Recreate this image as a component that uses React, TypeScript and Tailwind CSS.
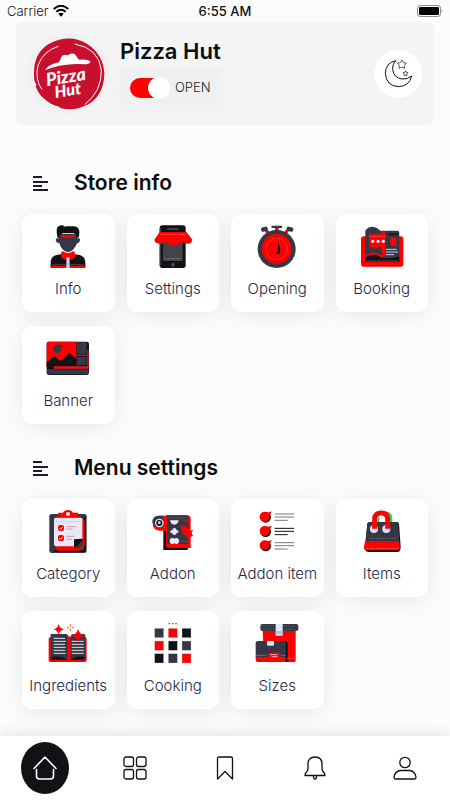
import { useState, type ReactNode } from "react";

const INK = "#353745";
const RED = "#ff0000";
const DARK = "#111216";

function Art({ box, children }: { box: string; children: ReactNode }) {
  return (
    <svg viewBox={box} className="size-11 shrink-0" aria-hidden="true">
      {children}
    </svg>
  );
}

const InfoArt = () => (
  <Art box="94 195 132 132">
    <path d="M123 240q0-5 5-5l4 2v-12l9-4h38l9 4v12l4-2q5 0 4 6-2 9-9 9-3 10-12 19-8 7-15 7t-15-7q-8-8-11-19-10-1-11-10z" fill={INK} />
    <path d="M130 238q-6-22-3-33 4-9 14-9l9 1-4 3q6-1 12-1h18q16 0 18 15 1 12-4 24l-5-13-8-6h-32l-9 6z" fill={DARK} />
    <path d="M141 224h5q14 6 29 0h5v6q-19 8-39 2z" fill={RED} />
    <path d="M108 324v-19q2-17 18-20l14-2h40l15 2q15 4 17 20v19z" fill={DARK} />
    <path d="M144 273q16 12 32 0l5 6v12l-11 9-10-7-10 7-11-9v-12z" fill={RED} />
    <path d="M108 317h104v4q0 3-4 3h-96q-4 0-4-3z" fill={RED} />
    <path d="M155 292h10v32h-10z" fill="#c6d5ee" />
    <path d="M113 314h39M168 314h39" stroke="#8b8e99" strokeWidth="2" strokeDasharray="3 2" />
  </Art>
);

const SettingsArt = () => (
  <Art box="407 195 132 132">
    <rect x="433" y="196" width="78" height="128" rx="8" fill={DARK} />
    <rect x="433" y="204" width="5" height="112" fill={INK} />
    <rect x="443" y="235" width="59" height="68" rx="3" fill="#444448" />
    <path d="M456 207h34" stroke="#55565c" strokeWidth="4" />
    <circle cx="473" cy="314" r="6" fill="#4a4b50" />
    <path d="M448 296h50" stroke="#aaa" strokeWidth="2" strokeDasharray="3 2" />
    <path d="M433 216h80l18 23q-2 13-15 12-9 0-12-6-5 8-13 3-5 10-17 8-9 0-14-8-9 4-13-3-4 7-14 6-15-1-16-12z" fill={RED} />
    <path d="M434 223h78" stroke="#ff9a9a" strokeWidth="2" strokeDasharray="3 2" />
  </Art>
);

const OpeningArt = () => (
  <Art box="91 60 132 132">
    <path d="M151 65h11v16h-11zM120 78l8-5 9 11-8 6zM193 78l-8-5-9 11 8 6z" fill={RED} />
    <rect x="140" y="62" width="33" height="7" rx="3" fill={INK} />
    <rect x="109" y="66" width="20" height="13" rx="5" fill={INK} transform="rotate(-15 119 72)" />
    <rect x="186" y="66" width="20" height="13" rx="5" fill={INK} transform="rotate(15 196 72)" />
    <circle cx="156" cy="132" r="57" fill={INK} />
    <circle cx="156" cy="132" r="45" fill={RED} />
    <circle cx="156" cy="132" r="32" fill="none" stroke="#df7474" strokeWidth="2" strokeDasharray="6 3" />
    <path d="M156 91v7M156 166v7M115 132h8M189 132h8" stroke={INK} strokeWidth="2" />
    <path d="M160 113q8 10 7 24-1 10-11 10l-5-4q9 0 9-8z" fill={DARK} />
  </Art>
);

const BookingArt = () => (
  <Art box="404 60 132 132">
    <rect x="407" y="94" width="127" height="91" rx="8" fill={RED} />
    <path d="M420 77q7-12 22-12 14 1 22 12h52q6 0 6 6v87H420z" fill={INK} />
    <path d="M420 157q26-17 50 0 14 7 52-2v16H420z" fill={DARK} />
    <path d="M420 154q25-18 52 3" fill="none" stroke={RED} strokeWidth="5" />
    <path d="M431 88h45q5 0 5 5v28q0 5-5 5h-20l-12 9v-9h-13zM467 78h14v72q-6 8-12 3z" fill={RED} />
    <path d="M431 94h48" stroke="#f08b8b" strokeWidth="2" strokeDasharray="3 2" />
    <circle cx="442" cy="109" r="5" fill="#e9eefb" />
    <circle cx="458" cy="109" r="5" fill="#e9eefb" />
    <circle cx="474" cy="109" r="5" fill="#e9eefb" />
    <path d="M489 88h28" stroke={DARK} strokeWidth="5" />
    <rect x="495" y="98" width="18" height="25" rx="2" fill={RED} />
    <path d="M482 133h32M482 141h36M482 149h24" stroke="#c8cbd5" strokeWidth="3" />
    <path d="M424 168h96" stroke="#bbb" strokeWidth="2" strokeDasharray="3 2" />
  </Art>
);

const BannerArt = () => (
  <Art box="94 51 132 132">
    <rect x="96" y="65" width="127" height="100" rx="7" fill={DARK} />
    <path d="M103 65h82v75h-89V72q0-7 7-7z" fill={RED} />
    <path d="M118 80q6-7 14-6h10v9q-3 12-13 16h-10q-5-10-1-19z" fill={INK} />
    <path d="M96 126l23-18 17 15 29-25 20 19v23H96z" fill={DARK} />
    <path d="M187 67h29v36h-29zM187 111h29v25h-29z" fill={INK} />
    <path d="M185 106h33M118 143h104" stroke="#cc1119" strokeWidth="4" />
    <path d="M118 139h100V90h4v56H118z" fill="#e8131b" />
    <path d="M98 148h124v9q0 6-6 6H104q-6 0-6-6z" fill={INK} />
  </Art>
);

const CategoryArt = () => (
  <Art box="94 60 132 132">
    <rect x="104" y="72" width="112" height="117" rx="7" fill={INK} />
    <path d="M208 80h5v106h-95v-5h90z" fill={DARK} />
    <path d="M124 87h80q6 0 6 6v70q-2 15-18 19h-60q-8 0-8-8z" fill={RED} />
    <path d="M121 83h77q5 0 5 5v58l-24 23h-55q-6 0-6-6V88z" fill="#e6e9f7" />
    <path d="M203 146v7l-20 20-5-5v-20z" fill={DARK} />
    <path d="M205 156v9l-12 10h-11z" fill={INK} />
    <path d="M131 68h14q4-8 15-8t15 8h13q3 0 3 4v9h-61v-9q0-4 1-4z" fill={RED} />
    <circle cx="160" cy="72" r="6" fill="#f2f3fb" />
    <path d="M124 95h74" stroke="#adb0be" strokeWidth="2" strokeDasharray="4 3" />
    <rect x="130" y="105" width="18" height="18" rx="6" fill={RED} />
    <rect x="130" y="135" width="18" height="18" rx="6" fill={RED} />
    <path d="M134 114l4 4 6-7M134 144l4 4 6-7" stroke="#fff" strokeWidth="3" fill="none" />
    <path d="M155 110h29M155 117h19M155 139h24M155 148h17" stroke="#e76c77" strokeWidth="2" />
  </Art>
);

const AddonArt = () => (
  <Art box="407 60 132 132">
    <path d="M444 110h74v66q0 4-4 4h-70z" fill={DARK} />
    <path d="M452 76h62q12 0 12 12v86h-66q-8 0-8-8z" fill={RED} />
    <path d="M455 76h58q6 0 6 6v80h-64z" fill={INK} />
    <path d="M432 77h23v45h-21q-17 0-22-16z" fill={RED} />
    <path d="M443 77v34h-13q-19-1-19-17 1-17 20-17z" fill={INK} />
    <circle cx="432" cy="99" r="13" fill="#dfe4f4" />
    <circle cx="432" cy="99" r="9" fill={DARK} />
    <circle cx="432" cy="98" r="4" fill="#e6e9f7" />
    <path d="M464 91h26q-3 13-13 13t-13-13z" fill="#e6e9f7" />
    <path d="M464 125q2-4 7-4 1-7 6-7 6 0 7 7 5 0 6 4-2 4-6 4-1 6-7 6-5 0-7-6-4 0-6-4z" fill="#e6e9f7" />
    <ellipse cx="471" cy="153" rx="8" ry="9" fill="#e6e9f7" />
    <ellipse cx="483" cy="153" rx="8" ry="9" fill="#e6e9f7" />
    <path d="M495 104l21 8 8 10 9-2-4 9 4 9-9 3-7 8-3-12-13-7z" fill={RED} />
    <path d="M499 93h18M493 154h23" stroke="#d41922" strokeWidth="3" />
    <path d="M460 84h56" stroke="#747681" strokeWidth="2" strokeDasharray="4 3" />
  </Art>
);

const AddonItemArt = () => (
  <Art box="91 60 132 132">
    {[0, 43, 86].map((y) => (
      <g key={y}>
        <circle cx="123" cy={82 + y} r="16" fill={DARK} />
        <circle cx="120" cy={80 + y} r="15" fill={RED} />
        <path d={`M126 ${69 + y}l15-5-5 12z`} fill={RED} />
        <path
          d={`M150 ${72 + y}h58M150 ${81 + y}h58M150 ${91 + y}h39`}
          stroke={y === 43 ? "#111216" : "#777983"}
          strokeWidth="3"
        />
      </g>
    ))}
  </Art>
);

const ItemsArt = () => (
  <Art box="404 60 132 132">
    <path d="M484 64q17 4 17 22v11h-10z" fill="#17e05e" />
    <path d="M435 96h80q5 0 6 5l5 69q0 16-10 16h-86q-9 0-11-9l7-76q1-5 9-5z" fill={DARK} />
    <path d="M433 96h78q6 0 7 6l4 53H420l6-54q1-5 7-5z" fill={INK} />
    <path d="M419 153h102l3 20q0 8-8 8h-93q-8 0-7-9z" fill={RED} />
    <circle cx="446" cy="117" r="12" fill="#dfe5f7" />
    <circle cx="483" cy="117" r="12" fill="#dfe5f7" />
    <path d="M448 116V88q0-18 18-19h2q19 0 19 19v28" fill="none" stroke={RED} strokeWidth="15" />
    <path d="M457 96V83q3-6 6-4v17z" fill="#14d65a" />
    <path d="M462 79q6-3 13 0v17h-13z" fill="#fff" />
    <path d="M431 145h82" stroke="#858791" strokeWidth="2" strokeDasharray="4 3" />
    <path d="M424 176h94" stroke="#ff9b9b" strokeWidth="2" strokeDasharray="4 3" />
  </Art>
);

const IngredientsArt = () => (
  <Art box="94 51 132 132">
    <rect x="102" y="96" width="114" height="75" rx="6" fill={RED} />
    <path d="M108 87h45q8 0 8 8v69h-47q-6 0-6-6zM168 93q2-6 8-6h32q4 0 4 5v66q0 6-6 6h-38z" fill={INK} />
    <path d="M158 94h8v76h-8z" fill={RED} />
    <path d="M108 157q27-7 50 7h-45q-5 0-5-7zM166 164q24-14 46-7-1 7-8 7z" fill={DARK} />
    <path d="M117 100h34M117 109h37M117 118h34M117 127h36M117 136h34M117 145h36M171 109h36M171 118h36M171 127h36M171 136h36M171 145h36" stroke="#dfe4ed" strokeWidth="3" />
    <path d="M132 56q2 14 17 17-15 3-17 17-2-14-16-17 14-3 16-17zM190 71q3 17 21 21-18 4-21 20-3-16-20-20 17-4 20-21z" fill={RED} />
    <path d="M167 57v8M167 71v8M157 68h7M171 68h7" stroke={RED} strokeWidth="2" />
  </Art>
);

const cookingCells = [INK, RED, DARK, RED, DARK, INK, DARK, INK, RED];

const CookingArt = () => (
  <Art box="407 51 132 132">
    {cookingCells.map((fill, i) => (
      <rect
        key={i}
        x={418 + (i % 3) * 41}
        y={70 + Math.floor(i / 3) * 38}
        width="27"
        height="28"
        fill={fill}
        stroke="#cfd0d3"
        strokeWidth="1"
      />
    ))}
    <path d="M460 56h26" stroke={RED} strokeWidth="4" strokeDasharray="4 6" />
  </Art>
);

const SizesArt = () => (
  <Art box="91 51 132 132">
    <path d="M114 75h99v92q0 4-5 4h-90z" fill={RED} />
    <rect x="107" y="57" width="114" height="21" rx="6" fill={INK} />
    <path d="M110 63h108M110 73h108" stroke="#666975" strokeWidth="2" strokeDasharray="3 2" />
    <path d="M153 57h21v35h-21z" fill="#e0e8fa" />
    <path d="M153 78h21v9h-21z" fill="#a9c5f2" />
    <path d="M105 108h76q8 0 8 8v55h-83z" fill={DARK} />
    <path d="M100 108h76q7 0 7 7v42H93v-42q0-7 7-7z" fill={INK} />
    <path d="M93 156h90v15H99q-6 0-6-6z" fill={RED} />
    <path d="M127 108h21v10q0 4-4 4h-13q-4 0-4-4z" fill="#e0e8fa" />
    <path d="M131 143h35v22h-35z" fill={RED} />
    <path d="M136 149h23M141 155h18" stroke="#fff" strokeWidth="2" />
    <path d="M96 151h31M169 151h14M187 160h24" stroke="#aaa" strokeWidth="2" strokeDasharray="4 2" />
  </Art>
);

type Tile = { label: string; art: ReactNode };

const storeTiles: Tile[] = [
  { label: "Info", art: <InfoArt /> },
  { label: "Settings", art: <SettingsArt /> },
  { label: "Opening", art: <OpeningArt /> },
  { label: "Booking", art: <BookingArt /> },
  { label: "Banner", art: <BannerArt /> },
];

const menuTiles: Tile[] = [
  { label: "Category", art: <CategoryArt /> },
  { label: "Addon", art: <AddonArt /> },
  { label: "Addon item", art: <AddonItemArt /> },
  { label: "Items", art: <ItemsArt /> },
  { label: "Ingredients", art: <IngredientsArt /> },
  { label: "Cooking", art: <CookingArt /> },
  { label: "Sizes", art: <SizesArt /> },
];

function Section({ title, tiles }: { title: string; tiles: Tile[] }) {
  return (
    <section className="px-[22px]">
      <div className="flex items-center gap-[25px] pl-[11px]">
        <svg viewBox="0 0 16 16" className="size-4" stroke="#1b1d2b" strokeWidth="2" aria-hidden="true">
          <path d="M0 2h9M0 7h15M0 11h9M0 15h15" />
        </svg>
        <h2 className="text-[21px] leading-7 font-semibold text-[#0c0d0f]">{title}</h2>
      </div>
      <div className="mt-[17px] grid grid-cols-4 gap-x-3 gap-y-3.5">
        {tiles.map((tile) => (
          <button
            key={tile.label}
            type="button"
            className="flex h-[98px] flex-col items-center rounded-[10px] bg-white pt-[11px] shadow-[0_4px_24px_rgba(0,0,0,0.08)]"
          >
            {tile.art}
            <span className="mt-[9px] text-[15px] leading-[22px] font-light whitespace-nowrap text-[#25274a]">
              {tile.label}
            </span>
          </button>
        ))}
      </div>
    </section>
  );
}

function StatusBar() {
  return (
    <div className="grid h-[22px] grid-cols-3 items-center px-[7px] text-[13px] leading-4 text-[#111]">
      <div className="flex items-center gap-[5px]">
        <span className="font-light">Carrier</span>
        <svg viewBox="0 0 48 36" className="h-3 w-4" fill="none" stroke="#000" aria-label="Wi-Fi">
          <path d="M2 12q22-19 44 0" strokeWidth="6" />
          <path d="M10 20q14-12 28 0" strokeWidth="6" />
          <path d="M16 26q8-6 16 0l-8 9z" fill="#000" stroke="none" />
        </svg>
      </div>
      <span className="text-center font-medium">6:55 AM</span>
      <svg viewBox="0 0 78 36" className="h-3 w-[26px] justify-self-end" aria-label="Battery full">
        <rect x="1.5" y="1.5" width="69" height="33" rx="8" fill="none" stroke="#8c8c8c" strokeWidth="3" />
        <rect x="6" y="6" width="60" height="24" rx="4" fill="#000" />
        <path d="M74 13q5 5 0 10z" fill="#8c8c8c" />
      </svg>
    </div>
  );
}

function Logo() {
  return (
    <div className="flex size-[81px] items-center justify-center rounded-full bg-[#eff0f1]">
      <svg viewBox="96 112 216 216" className="size-[72px]" role="img" aria-label="Pizza Hut logo">
        <path d="M99 222Q97 158 143 130q65-33 117 1 48 32 50 90-3 67-52 92-57 27-108-4-52-29-51-87z" fill="#c8102e" />
        <path d="M172 137q-45 14-61 57-10 42 12 73M221 130q72 12 80 78 2 63-50 104" fill="none" stroke="#fff" strokeWidth="3" />
        <path d="M97 240l8 15M127 295q20 22 48 25" stroke="#fff" strokeWidth="4" fill="none" />
        <path d="M132 208q9-16 42-23l9-20q10-5 17-1 9-9 21-4l13 17q24-3 34 5 1 8-14 9-64-6-122 17z" fill="#fff" />
        <g transform="rotate(-9 203 240)" fill="#fff" fontFamily="Lato, sans-serif" fontStyle="italic" fontWeight="900">
          <text x="136" y="246" fontSize="54">Pizza</text>
          <text x="156" y="285" fontSize="49">Hut</text>
        </g>
      </svg>
    </div>
  );
}

function StoreHeader() {
  const [open, setOpen] = useState(true);
  return (
    <header className="mx-4 flex items-center rounded-md bg-[#f4f4f4] px-3 py-[11px]">
      <Logo />
      <div className="ml-[11px] flex flex-col items-start gap-1 pb-1">
        <h1 className="text-[22px] leading-7 font-semibold text-[#0c0d0f]">Pizza Hut</h1>
        <label className="flex h-[37px] items-center gap-[7px] rounded bg-[#eff0f1] pr-[11px] pl-2.5 text-[13px] font-light text-[#1b1b1f] shadow-[0_4px_16px_rgba(0,0,0,0.02)]">
          <input
            type="checkbox"
            checked={open}
            onChange={(e) => setOpen(e.target.checked)}
            className="relative h-5 w-[38px] appearance-none rounded-full bg-gray-400 before:absolute before:-top-px before:-left-px before:size-[22px] before:rounded-full before:bg-white checked:bg-[#ff0000] checked:before:left-[18px]"
          />
          OPEN
        </label>
      </div>
      <button
        type="button"
        aria-label="Dark mode"
        className="ml-auto flex size-12 items-center justify-center rounded-full bg-white"
      >
        <svg viewBox="476 177 87 87" className="size-[29px]" fill="none" stroke="#111" strokeWidth="3" strokeLinejoin="round">
          <path d="M512 182q-31 6-32 38 3 38 39 40 33-1 40-32-13 11-29 9-24-3-28-28-1-17 10-27z" />
          <path d="M530 180l4 8 9 1-6 7 1 9-8-4-9 4 1-9-6-7 9-1zM541 212l2 5 5 1-4 4 1 5-4-2-5 2 1-5-4-4 5-1z" strokeWidth="2" />
        </svg>
      </button>
    </header>
  );
}

function NavIcon({ children }: { children: ReactNode }) {
  return (
    <svg
      viewBox="0 0 24 24"
      className="size-6"
      fill="none"
      stroke="currentColor"
      strokeWidth="1.3"
      strokeLinejoin="round"
      strokeLinecap="round"
      aria-hidden="true"
    >
      {children}
    </svg>
  );
}

const navItems: Tile[] = [
  {
    label: "Home",
    art: <path d="M1 12.5L12 1l11 11.5M3.5 13.5v6.5q0 3 3 3h11q3 0 3-3v-6.5" strokeWidth="1.6" />,
  },
  {
    label: "Dashboard",
    art: (
      <>
        <rect x="1" y="1" width="9.5" height="9.5" rx="2" />
        <rect x="13.5" y="1" width="9.5" height="9.5" rx="2" />
        <rect x="1" y="13.5" width="9.5" height="9.5" rx="2" />
        <rect x="13.5" y="13.5" width="9.5" height="9.5" rx="2" />
      </>
    ),
  },
  { label: "Saved", art: <path d="M6 1h12q1.5 0 1.5 1.5V23L12 15.5 4.5 23V2.500Q4.500 1 6 1z" /> },
  {
    label: "Notifications",
    art: (
      <path d="M12 1q7 0 7 7v4.5q0 2 1.500 3.500 1.500 1.500 1.500 3.500H2q0-2 1.500-3.500Q5 14.500 5 12.500V8q0-7 7-7zM10.500 19.500V21q0 2 1.500 2t1.500-2v-1.500" />
    ),
  },
  {
    label: "Profile",
    art: (
      <>
        <circle cx="12" cy="6.5" r="5.2" />
        <path d="M7 14.500h10q5 1 6 6.500 0 2-2 2H3q-2 0-2-2 1-5.500 6-6.500z" />
      </>
    ),
  },
];

function BottomNav() {
  return (
    <nav className="sticky bottom-0 mt-auto grid h-16 grid-cols-5 place-items-center bg-white shadow-[0_0_16px_rgba(0,0,0,0.12)]">
      {navItems.map((item, i) => (
        <button
          key={item.label}
          type="button"
          aria-label={item.label}
          className={
            i === 0
              ? "flex h-[52px] w-12 items-center justify-center rounded-[50%] bg-[#111216] text-white"
              : "flex h-[52px] w-12 items-center justify-center text-[#111]"
          }
        >
          <NavIcon>{item.art}</NavIcon>
        </button>
      ))}
    </nav>
  );
}

export default function App() {
  return (
    <div className="flex min-h-screen flex-col bg-[#fcfcfc] font-['Inter','Liberation_Sans',sans-serif]">
      <StatusBar />
      <StoreHeader />
      <main className="flex flex-col gap-[30px] pt-11 pb-[26px]">
        <Section title="Store info" tiles={storeTiles} />
        <Section title="Menu settings" tiles={menuTiles} />
      </main>
      <BottomNav />
    </div>
  );
}
